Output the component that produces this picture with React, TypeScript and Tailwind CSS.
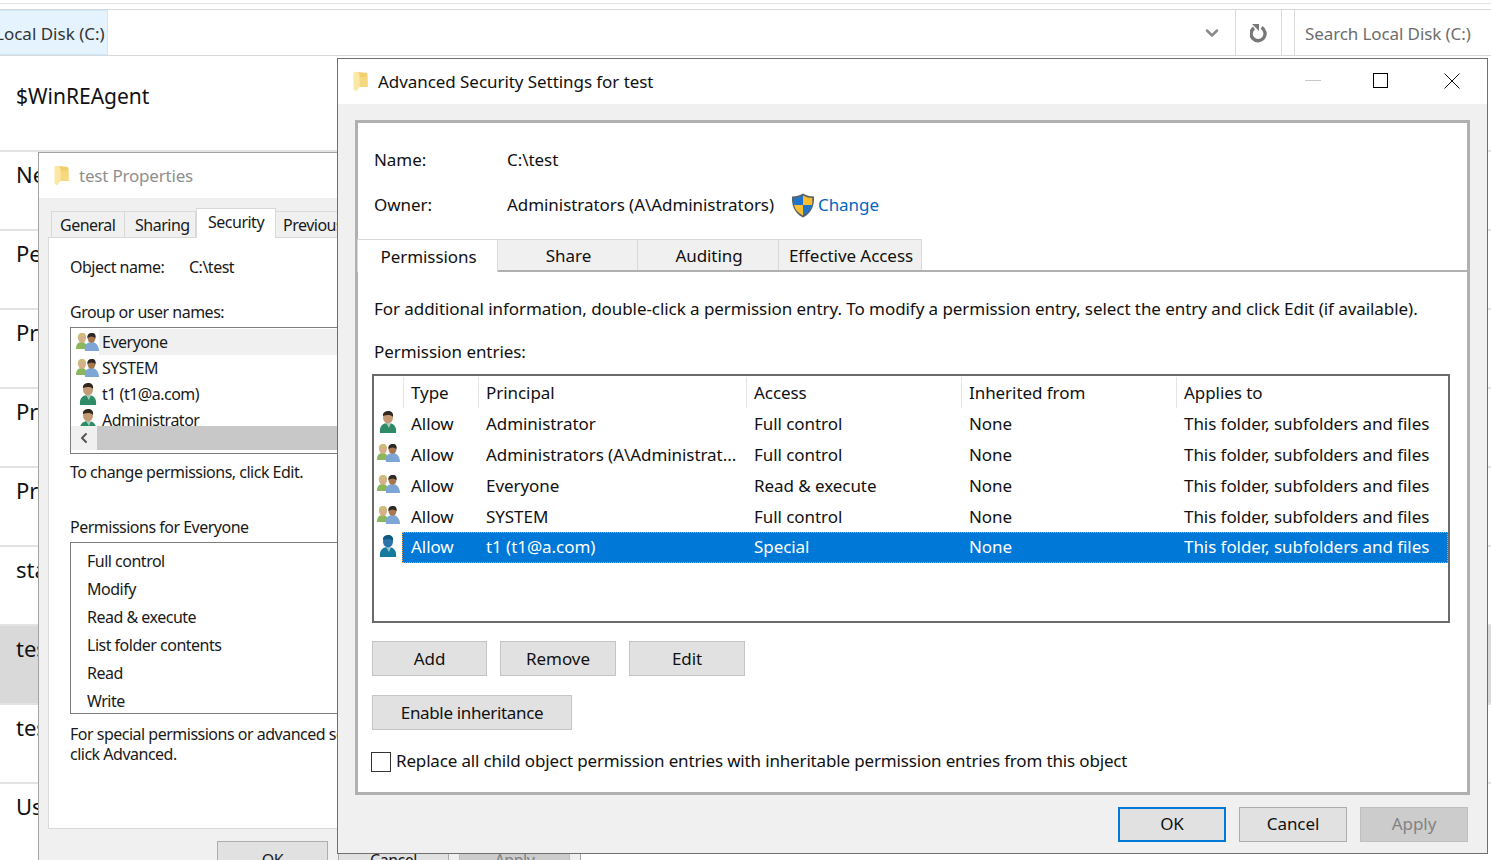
import { ChevronDown, ChevronLeft } from 'lucide-react';

const Folder = () => (
  <svg width="15" height="21" viewBox="0 0 15 21">
    <path d="M5 1 L14 2 V3 L14.5 3 V16 H5 Z" fill="#f3cf6b" />
    <path d="M6 6 H14.5 V16 H6 Z" fill="#f6d87e" />
    <path d="M0.5 1.5 L5 0.5 L6.5 4 V16 L3 20.5 L0.5 18 Z" fill="#fbe7a6" />
  </svg>
);

const Person = ({ body = '#2f8a68', hair = '#33281f', skin = '#c49a74' }: { body?: string; hair?: string; skin?: string }) => (
  <svg width="18" height="23" viewBox="0 0 18 23">
    <path d="M1 22 C0 15 4 12 9 12 C14 12 18 15 17 22 Z" fill={body} />
    <path d="M7 12 L10 17 L12 12 Z" fill="#d9e7df" opacity="0.7" />
    <ellipse cx="9" cy="6.5" rx="5" ry="6" fill={skin} />
    <path d="M4 5 C3.5 1 7 0 9.5 0 C13 0 14.5 2.5 14 6 C12 3.5 8 3.5 4 5 Z" fill={hair} />
  </svg>
);

const People = () => (
  <svg width="23" height="19" viewBox="0 0 23 19">
    <path d="M0 16 C0 10 3 9 6 9 C9 9 11 11 11 16 Z" fill="#8cb65c" />
    <ellipse cx="6" cy="5" rx="4" ry="4.8" fill="#d6b089" />
    <path d="M2 6 C1 1 4 0 6.5 0 C9 0 10 2 10 4 C7 3 4 3 2 6 Z" fill="#cdbb7c" />
    <path d="M9 18 C8 12 11 9 16 9 C20 9 23 13 23 18 Z" fill="#7ea6d4" />
    <ellipse cx="15.5" cy="5" rx="4" ry="4.8" fill="#a8774f" />
    <path d="M11.5 5 C11 1 13.5 0 16 0 C19 0 20 2 19.5 5 C17 3 14 3 11.5 5 Z" fill="#2c2925" />
  </svg>
);

const Shield = () => (
  <svg width="24" height="25" viewBox="0 0 24 25">
    <path d="M12 0.5 C15 2.5 19 3.5 23 3.5 C23.5 12 21 20 12 24.5 C3 20 0.5 12 1 3.5 C5 3.5 9 2.5 12 0.5 Z" fill="#5b6268" />
    <path d="M12 2.5 V12 H3 C2.6 9.5 2.6 7 2.8 5 C6 5 9 4.2 12 2.5 Z" fill="#1f74c9" />
    <path d="M12 2.5 C15 4.2 18 5 21.2 5 C21.4 7 21.4 9.5 21 12 H12 Z" fill="#fbbe2e" />
    <path d="M3 12 H12 V22.5 C7 19.8 4 16.5 3 12 Z" fill="#fbbe2e" />
    <path d="M21 12 H12 V22.5 C17 19.8 20 16.5 21 12 Z" fill="#1f74c9" />
  </svg>
);

const Refresh = () => (
  <svg width="18" height="20" viewBox="0 0 18 20" fill="none">
    <path d="M11.5 4.6 A7 7 0 1 1 4 5" stroke="#787878" strokeWidth="3.4" />
    <path d="M2 1 H9 V8 Z" fill="#787878" />
  </svg>
);

const FILE_ROWS = [
  { label: 'New' },
  { label: 'Per' },
  { label: 'Pro' },
  { label: 'Pro' },
  { label: 'Pro' },
  { label: 'sta' },
  { label: 'test', selected: true },
  { label: 'test' },
  { label: 'Users' },
];

const ENTRIES = [
  { icon: 'one', type: 'Allow', principal: 'Administrator', access: 'Full control' },
  { icon: 'many', type: 'Allow', principal: 'Administrators (A\\Administrat...', access: 'Full control' },
  { icon: 'many', type: 'Allow', principal: 'Everyone', access: 'Read & execute' },
  { icon: 'many', type: 'Allow', principal: 'SYSTEM', access: 'Full control' },
  { icon: 'sel', type: 'Allow', principal: 't1 (t1@a.com)', access: 'Special', selected: true },
];

const HeaderCell = ({ children }: { children?: React.ReactNode }) => (
  <div className="h-[31px] border-r border-[#e5e5e5] pl-[7px] leading-[32px]">{children}</div>
);

const PropertiesWindow = () => (
  <div className="absolute left-[38px] top-[152px] h-[760px] w-[543px] border border-[#a3a3a3] bg-[#f0f0f0] text-[16px] tracking-[-0.5px] text-[#1a1a1a]">
    <div className="flex h-[45px] items-center bg-white pl-[15px]">
      <Folder />
      <span className="ml-[10px] text-[17px] tracking-[-0.2px] text-[#8f8f8f]">test Properties</span>
    </div>
    <div className="flex h-[39px] items-end pl-[12px]">
      <div className="h-[26px] w-[74px] border border-b-0 border-[#d9d9d9] pl-[8px] leading-[27px]">General</div>
      <div className="h-[26px] w-[71px] border border-b-0 border-l-0 border-[#d9d9d9] pl-[10px] leading-[27px]">Sharing</div>
      <div className="relative z-10 -mb-px h-[30px] w-[80px] border border-b-0 border-[#d9d9d9] bg-white pl-[11px] leading-[26px]">Security</div>
      <div className="h-[26px] w-[80px] border border-b-0 border-l-0 border-[#d9d9d9] pl-[7px] leading-[27px]">Previous</div>
    </div>
    <div className="ml-[9px] h-[592px] w-[520px] border border-[#d9d9d9] bg-white pl-[21px] pt-[18px]">
      <div className="flex h-[22px] items-center">
        <span className="w-[119px]">Object name:</span>
        <span>C:\test</span>
      </div>
      <div className="mt-[23px] h-[22px] leading-[22px]">Group or user names:</div>
      <div className="mt-[4px] h-[127px] overflow-hidden border border-[#7d7d7d]">
        <div className="h-[98px] overflow-hidden">
          <div className="flex h-[26px] items-center pl-[5px] pt-[2px]">
            <People />
            <span className="flex h-[26px] flex-1 items-center bg-[#f0f0f0] pl-[3px]">Everyone</span>
          </div>
          <div className="flex h-[26px] items-center pl-[5px] pt-[2px]">
            <People />
            <span className="ml-[3px]">SYSTEM</span>
          </div>
          <div className="flex h-[26px] items-center pl-[8px] pt-[2px]">
            <Person />
            <span className="ml-[5px]">t1 (t1@a.com)</span>
          </div>
          <div className="flex h-[26px] items-center pl-[8px] pt-[2px]">
            <Person />
            <span className="ml-[5px]">Administrator</span>
          </div>
        </div>
        <div className="flex h-[24px] bg-[#c8c8c8]">
          <div className="flex w-[26px] items-center justify-center bg-[#f0f0f0]">
            <ChevronLeft size={16} strokeWidth={3} color="#555555" />
          </div>
        </div>
      </div>
      <div className="mt-[7px] h-[22px] leading-[22px]">To change permissions, click Edit.</div>
      <div className="mt-[33px] h-[22px] leading-[22px]">Permissions for Everyone</div>
      <div className="mt-[4px] h-[172px] overflow-hidden border border-[#7d7d7d] pl-[16px] pt-[4px] leading-[28px]">
        <div>Full control</div>
        <div>Modify</div>
        <div>Read &amp; execute</div>
        <div>List folder contents</div>
        <div>Read</div>
        <div>Write</div>
      </div>
      <div className="mt-[10px] whitespace-nowrap leading-[20px]">
        <div>For special permissions or advanced settings,</div>
        <div>click Advanced.</div>
      </div>
    </div>
    <div className="mt-[12px] flex gap-[10px] pl-[178px]">
      <div className="h-[36px] w-[111px] border border-[#adadad] bg-[#e1e1e1] text-center leading-[36px]">OK</div>
      <div className="h-[36px] w-[111px] border border-[#adadad] bg-[#e1e1e1] text-center leading-[36px]">Cancel</div>
      <div className="h-[36px] w-[111px] border border-[#bfbfbf] bg-[#cccccc] text-center leading-[36px] text-[#808080]">Apply</div>
    </div>
  </div>
);

const Tab = ({ label, w, active }: { label: string; w: string; active?: boolean }) => (
  <div
    className={
      active
        ? `relative z-10 -mb-[2px] h-[33px] ${w} border border-b-0 border-[#d9d9d9] bg-white pl-[2px] text-center leading-[33px]`
        : `h-[31px] ${w} border border-l-0 border-b-0 border-[#d9d9d9] bg-[#f0f0f0] pl-[2px] text-center leading-[31px]`
    }
  >
    {label}
  </div>
);

const AdvancedWindow = () => (
  <div className="absolute left-[337px] top-[58px] h-[796px] w-[1151px] border border-[#707070] bg-[#f0f0f0] text-[17px] tracking-[-0.06px] text-[#111111]">
    <div className="flex h-[45px] items-center bg-white pl-[15px]">
      <Folder />
      <span className="ml-[10px]">Advanced Security Settings for test</span>
      <div className="mb-[2px] ml-auto flex items-center">
        <div className="h-px w-[16px] bg-[#c8c8c8]" />
        <div className="ml-[52px] h-[15px] w-[15px] border border-black" />
        <svg className="ml-[56px] mr-[27px]" width="16" height="16" viewBox="0 0 16 16" stroke="#111" strokeWidth="1">
          <path d="M0.5 0.5 L15.5 15.5 M15.5 0.5 L0.5 15.5" />
        </svg>
      </div>
    </div>
    <div className="ml-[17px] mt-[16px] h-[675px] w-[1115px] border-[3px] border-[#b0b0b0] bg-white">
      <div className="mt-[24px] flex h-[25px] items-center pl-[16px]">
        <span className="w-[133px]">Name:</span>
        <span>C:\test</span>
      </div>
      <div className="mt-[20px] flex h-[25px] items-center pl-[16px]">
        <span className="w-[133px]">Owner:</span>
        <span>Administrators (A\Administrators)</span>
        <span className="ml-[17px] mt-[1px] flex items-center">
          <Shield />
          <span className="ml-[3px] -mt-[1px] text-[#0067c0]">Change</span>
        </span>
      </div>
      <div className="mt-[22px] flex h-[33px] items-end border-b-[2px] border-[#b0b0b0]">
        <div className="-ml-px flex items-end">
          <Tab label="Permissions" w="w-[141px]" active />
          <Tab label="Share" w="w-[140px]" />
          <Tab label="Auditing" w="w-[141px]" />
          <Tab label="Effective Access" w="w-[143px]" />
        </div>
      </div>
      <div className="whitespace-nowrap pl-[16px] pt-[24px] leading-[25px]">
        For additional information, double-click a permission entry. To modify a permission entry, select the entry and click Edit (if available).
      </div>
      <div className="pl-[16px] pt-[18px] leading-[25px]">Permission entries:</div>
      <div className="ml-[14px] mt-[10px] h-[249px] w-[1078px] border-2 border-[#6a6a6a] pt-px">
        <div className="grid grid-cols-[30px_75px_268px_215px_215px_1fr]">
          <HeaderCell />
          <HeaderCell>Type</HeaderCell>
          <HeaderCell>Principal</HeaderCell>
          <HeaderCell>Access</HeaderCell>
          <HeaderCell>Inherited from</HeaderCell>
          <div className="h-[31px] pl-[7px] leading-[32px]">Applies to</div>
        </div>
        {ENTRIES.map((e) => (
          <div key={e.principal} className="grid h-[31px] grid-cols-[28px_77px_268px_215px_215px_1fr] items-center">
            <div className="-mt-[2px] flex justify-center">
              {e.icon === 'many' ? <People /> : e.icon === 'sel' ? <Person body="#14799f" hair="#0d5a80" skin="#2a73a8" /> : <Person />}
            </div>
            <div
              className={`col-span-5 grid h-[31px] grid-cols-[77px_268px_215px_215px_1fr] ${
                e.selected
                  ? 'bg-[#0078d7] leading-[30px] text-white outline-1 -outline-offset-1 outline-dotted outline-[#e8a050]'
                  : 'leading-[31px]'
              }`}
            >
              <span className="pl-[9px]">{e.type}</span>
              <span className="pl-[7px]">{e.principal}</span>
              <span className="pl-[7px]">{e.access}</span>
              <span className="pl-[7px]">None</span>
              <span className="pl-[7px]">This folder, subfolders and files</span>
            </div>
          </div>
        ))}
      </div>
      <div className="ml-[14px] mt-[18px] flex gap-[13px]">
        <div className="h-[35px] w-[115px] border border-[#c4c4c4] bg-[#e1e1e1] text-center leading-[33px]">Add</div>
        <div className="h-[35px] w-[116px] border border-[#c4c4c4] bg-[#e1e1e1] text-center leading-[33px]">Remove</div>
        <div className="h-[35px] w-[116px] border border-[#c4c4c4] bg-[#e1e1e1] text-center leading-[33px]">Edit</div>
      </div>
      <div className="ml-[14px] mt-[19px] h-[35px] w-[200px] border border-[#c4c4c4] bg-[#e1e1e1] text-center leading-[33px] tracking-[-0.35px]">Enable inheritance</div>
      <div className="ml-[13px] mt-[20px] flex items-center">
        <div className="h-[20px] w-[20px] border border-[#333333] bg-white" />
        <span className="ml-[5px] -mt-[2px] tracking-[-0.16px]">Replace all child object permission entries with inheritable permission entries from this object</span>
      </div>
    </div>
    <div className="mt-[12px] flex gap-[13px] pl-[780px]">
      <div className="h-[35px] w-[108px] border-2 border-[#0078d7] bg-[#e1e1e1] text-center leading-[29px]">OK</div>
      <div className="h-[35px] w-[108px] border border-[#adadad] bg-[#e1e1e1] text-center leading-[31px]">Cancel</div>
      <div className="h-[35px] w-[108px] border border-[#bfbfbf] bg-[#cccccc] text-center leading-[31px] text-[#838383]">Apply</div>
    </div>
  </div>
);

export default function App() {
  return (
    <div className="relative h-[860px] w-[1491px] overflow-hidden bg-white font-['Noto_Sans','Open_Sans',sans-serif] text-[#111111]">
      <div className="h-[9px]">
        <div className="h-[4px] border-b border-[#e3e3e3]" />
      </div>
      <div className="flex h-[47px] border-y border-[#d9d9d9]">
        <div className="-ml-[11px] flex h-[45px] w-[119px] items-center whitespace-nowrap border border-[#cce8ff] bg-[#e5f3ff] pl-[5px] pt-[2px] text-[17px] text-[#333333]">
          Local Disk (C:)
        </div>
        <div className="flex-1" />
        <div className="flex w-[47px] items-center justify-center">
          <ChevronDown size={20} strokeWidth={3} color="#8a8a8a" />
        </div>
        <div className="flex w-[47px] items-center justify-center border-x border-[#d9d9d9]">
          <Refresh />
        </div>
        <div className="w-[12px] bg-white" />
        <div className="flex w-[197px] items-center border-l border-[#d9d9d9] pl-[10px] pt-[2px] text-[17px] tracking-[-0.1px] text-[#6d6d6d]">
          Search Local Disk (C:)
        </div>
      </div>
      <div className="flex h-[96px] items-center border-b-2 border-[#e3e3e3] pb-[12px] pl-[16px] text-[21px]">$WinREAgent</div>
      {FILE_ROWS.map((r, i) => (
        <div key={i} className={`h-[79px] border-b-2 border-[#e3e3e3] pl-[16px] pt-[6px] text-[22px] ${r.selected ? 'bg-[#d9d9d9]' : ''}`}>
          {r.label}
        </div>
      ))}
      <PropertiesWindow />
      <AdvancedWindow />
    </div>
  );
}
